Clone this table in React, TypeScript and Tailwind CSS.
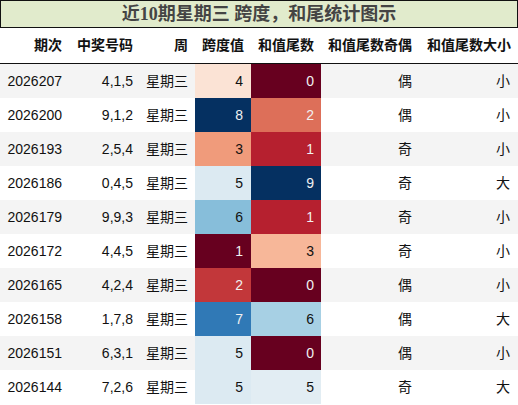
import React from 'react';

type Row = {
  issue: string;
  nums: string;
  week: string;
  span: number;
  tail: number;
  parity: string;
  size: string;
};

const rows: Row[] = [
  { issue: '2026207', nums: '4,1,5', week: '星期三', span: 4, tail: 0, parity: '偶', size: '小' },
  { issue: '2026200', nums: '9,1,2', week: '星期三', span: 8, tail: 2, parity: '偶', size: '小' },
  { issue: '2026193', nums: '2,5,4', week: '星期三', span: 3, tail: 1, parity: '奇', size: '小' },
  { issue: '2026186', nums: '0,4,5', week: '星期三', span: 5, tail: 9, parity: '奇', size: '大' },
  { issue: '2026179', nums: '9,9,3', week: '星期三', span: 6, tail: 1, parity: '奇', size: '小' },
  { issue: '2026172', nums: '4,4,5', week: '星期三', span: 1, tail: 3, parity: '奇', size: '小' },
  { issue: '2026165', nums: '4,2,4', week: '星期三', span: 2, tail: 0, parity: '偶', size: '小' },
  { issue: '2026158', nums: '1,7,8', week: '星期三', span: 7, tail: 6, parity: '偶', size: '大' },
  { issue: '2026151', nums: '6,3,1', week: '星期三', span: 5, tail: 0, parity: '偶', size: '小' },
  { issue: '2026144', nums: '7,2,6', week: '星期三', span: 5, tail: 5, parity: '奇', size: '大' },
];

// RdBu 色阶, 已按数值换算好
const spanCls: Record<number, string> = {
  1: 'bg-[#67001f] text-[#f1f1f1]',
  2: 'bg-[#c2373a] text-[#f1f1f1]',
  3: 'bg-[#f09b7b] text-[#111]',
  4: 'bg-[#fbe3d5] text-[#111]',
  5: 'bg-[#dceaf2] text-[#111]',
  6: 'bg-[#87beda] text-[#111]',
  7: 'bg-[#3079b6] text-[#f1f1f1]',
  8: 'bg-[#053061] text-[#f1f1f1]',
};

const tailCls: Record<number, string> = {
  0: 'bg-[#67001f] text-[#f1f1f1]',
  1: 'bg-[#b6202f] text-[#f1f1f1]',
  2: 'bg-[#dd6f59] text-[#f1f1f1]',
  3: 'bg-[#f7b799] text-[#111]',
  5: 'bg-[#e2edf3] text-[#111]',
  6: 'bg-[#a7d0e4] text-[#111]',
  9: 'bg-[#053061] text-[#f1f1f1]',
};

const headers = ['期次', '中奖号码', '周', '跨度值', '和值尾数', '和值尾数奇偶', '和值尾数大小'];

const grid = 'grid grid-cols-[69px_71px_55px_56px_70px_98px_99px]';

export default function App() {
  return (
    <div
      className="w-[518px] bg-white text-[14px] text-[#111]"
      style={{ fontFamily: "'Liberation Sans', 'Noto Sans CJK SC', sans-serif" }}
    >
      <div
        className="h-[28px] border border-[#111] bg-[#e1ebcc] flex items-center justify-center text-[18px] font-bold text-[#444] leading-none"
        style={{ fontFamily: "'Liberation Serif', 'Noto Sans CJK SC', serif" }}
      >
        近10期星期三 跨度，和尾统计图示
      </div>
      <div className={`${grid} h-[36px] border-b border-[#111] font-bold`}>
        {headers.map((h) => (
          <div key={h} className="flex items-center justify-end pr-[7px]">
            {h}
          </div>
        ))}
      </div>
      {rows.map((r, i) => (
        <div key={r.issue} className={`${grid} h-[34px] ${i % 2 === 0 ? 'bg-[#f4f4f4]' : 'bg-white'}`}>
          <div className="flex items-center justify-end pr-[7px]">{r.issue}</div>
          <div className="flex items-center justify-end pr-[7px]">{r.nums}</div>
          <div className="flex items-center justify-end pr-[7px]">{r.week}</div>
          <div className={`flex items-center justify-end pr-[8px] ${spanCls[r.span]}`}>{r.span}</div>
          <div className={`flex items-center justify-end pr-[7px] ${tailCls[r.tail]}`}>{r.tail}</div>
          <div className="flex items-center justify-end pr-[7px]">{r.parity}</div>
          <div className="flex items-center justify-end pr-[8px]">{r.size}</div>
        </div>
      ))}
    </div>
  );
}
